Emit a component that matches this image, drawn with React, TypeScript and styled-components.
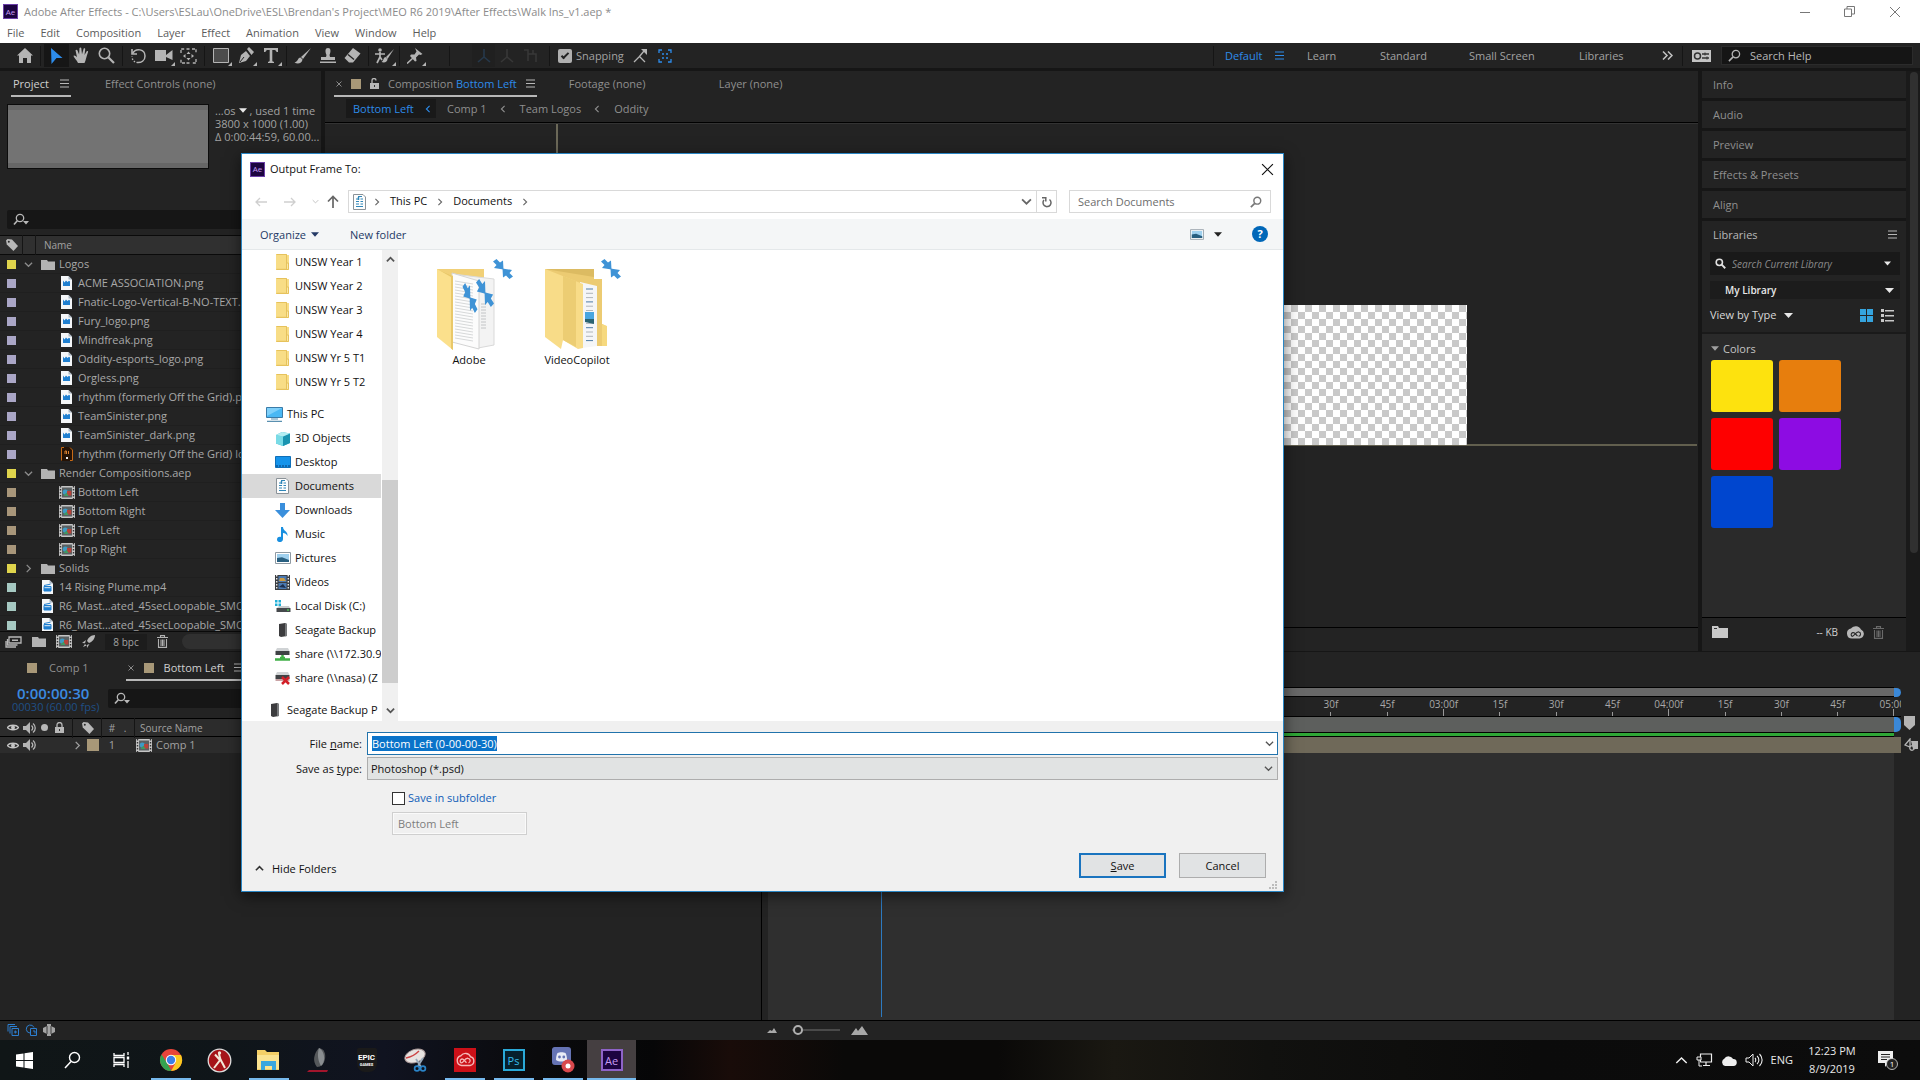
import React, { useEffect, useRef } from "react";
import styled, { createGlobalStyle } from "styled-components";

const Global = createGlobalStyle`
  *, *::before, *::after { box-sizing: border-box; }
  body { margin: 0; background: #161616; overflow: hidden; }
  body, button, input, select { font-family: "Open Sans", "Noto Sans", sans-serif; }
  button, input, select { margin: 0; padding: 0; border: 0; background: none; color: inherit; font-size: inherit; border-radius: 0; }
  button { cursor: default; white-space: nowrap; }
  ul { list-style: none; margin: 0; padding: 0; }
  svg { display: block; flex: none; }
`;

const c = {
  panel: "#232323",
  dark: "#161616",
  line: "#0a0a0a",
  text: "#a2a2a2",
  blue: "#2d8ceb",
  tan: "#a89878",
};

/* ---------- icons ---------- */

type IcoProps = { w?: number; h?: number; box?: string; children: React.ReactNode };
const Ico = ({ w = 16, h = 16, box, children }: IcoProps) => (
  <svg width={w} height={h} viewBox={box || `0 0 ${w} ${h}`} fill="none" aria-hidden="true">{children}</svg>
);

const Burger = ({ color = "#b8b8b8" }: { color?: string }) => (
  <Ico w={9} h={9}><path d="M0 1h9M0 4.500h9M0 8h9" stroke={color} strokeWidth="1" /></Ico>
);
const Caret = ({ color = "#e8e8e8", w = 9 }: { color?: string; w?: number }) => (
  <Ico w={w} h={5} box="0 0 9 5"><path d="M0 0h9L4.500 5z" fill={color} /></Ico>
);
const Chevron = ({ dir = "down", color = "#444", size = 9, sw = 1.4 }: { dir?: "down" | "up" | "left" | "right"; color?: string; size?: number; sw?: number }) => {
  const d = { down: "M1 3l4 4 4-4", up: "M1 7l4-4 4 4", left: "M7 1L3 5l4 4", right: "M3 1l4 4-4 4" }[dir];
  return <Ico w={size} h={size} box="0 0 10 10"><path d={d} stroke={color} strokeWidth={sw} /></Ico>;
};
const Loupe = ({ color = "#b4b4b4", size = 13, flip = false, sw = 1.4 }: { color?: string; size?: number; flip?: boolean; sw?: number }) => (
  <Ico w={size} h={size} box="0 0 14 14">
    {flip
      ? <><circle cx="5.500" cy="5.500" r="4" stroke={color} strokeWidth={sw} /><path d="M8.500 8.500L13 13" stroke={color} strokeWidth={sw + 0.4} /></>
      : <><circle cx="8.500" cy="5.500" r="4" stroke={color} strokeWidth={sw} /><path d="M5.500 8.500L1 13" stroke={color} strokeWidth={sw + 0.3} /></>}
  </Ico>
);
const LoupeMenu = () => (
  <Ico w={17} h={13}><circle cx="7" cy="5" r="3.700" stroke="#b8b8b8" strokeWidth="1.300" /><path d="M4.300 7.700L1 11.500" stroke="#b8b8b8" strokeWidth="1.600" /><path d="M10 8h6l-3 3.500z" fill="#b8b8b8" /></Ico>
);
const Cross = ({ color, size = 12, sw = 1 }: { color: string; size?: number; sw?: number }) => (
  <Ico w={size} h={size} box="0 0 12 12"><path d="M1 1l10 10M11 1L1 11" stroke={color} strokeWidth={sw} /></Ico>
);
const FolderGrey = () => (
  <Ico w={14} h={11}><path d="M0 1h6l1 1.500h7V11H0z" fill="#b3b3b3" /></Ico>
);
const CompIcon = () => (
  <Ico w={16} h={13}>
    <path d="M0 0h16v13H0z" fill="#c4c4c4" /><path d="M3 1.500h10v10H3z" fill="#5b6062" />
    <path d="M1.500 0v13M14.500 0v13" stroke="#333" strokeWidth="1.400" strokeDasharray="1.500 1.500" />
    <circle cx="6.300" cy="6" r="2.600" fill="#3f9ac4" /><path d="M8 5h4.300v4.500H8z" fill="#b8433b" /><path d="M4.500 10l3-3.500 2 3.500z" fill="#3f9a62" />
  </Ico>
);
const PngIcon = () => (
  <Ico w={11} h={14}><path d="M0 0h7.500L11 3.500V14H0z" fill="#f4f6f8" /><path d="M7.500 0L11 3.500H7.500z" fill="#a9b6c2" /><path d="M2 4.500l1.500 2 1.500-2 1.500 1.500L8 4.800l1 .8V10H2z" fill="#1f7fd0" /></Ico>
);
const MovIcon = () => (
  <Ico w={11} h={14}><path d="M0 0h7.500L11 3.500V14H0z" fill="#f4f6f8" /><path d="M7.500 0L11 3.500H7.500z" fill="#a9b6c2" /><path d="M2 6.500h7V11H2zM2 5.500l6.500-1.300" fill="#1f7fd0" stroke="#1f7fd0" /><path d="M2.500 7.700h6" stroke="#dceaf6" /></Ico>
);
const AiIcon = () => (
  <Ico w={12} h={14}><path d="M0 0h9l3 3v11H0z" fill="#241205" /><path d="M.5 13.500V.5H3M9 .5l2.500 2.500v10.500H9" stroke="#c76a17" /><path d="M4 7V4h1.500v3M7.500 7V4" stroke="#d98030" /><path d="M5 10h2v2H5z" fill="#eee" /></Ico>
);
const Eye = () => (
  <Ico w={12} h={9}><path d="M.5 4.500C2.500 1.500 9.500 1.500 11.500 4.500 9.500 7.500 2.500 7.500.5 4.500z" stroke="#c4c4c4" strokeWidth="1.300" /><circle cx="6" cy="4.500" r="2" fill="#c4c4c4" /></Ico>
);
const Sound = () => (
  <Ico w={13} h={12}><path d="M0 4h3l4-4v12L3 8H0z" fill="#b4b4b4" /><path d="M8.500 3.500c1.500 1.500 1.500 3.500 0 5M10 1.500c3 2.500 3 6.500 0 9" stroke="#b4b4b4" strokeWidth="1.300" /></Ico>
);
const Lock = ({ open = false }: { open?: boolean }) => (
  <Ico w={9} h={11}><path d="M0 5h9v6H0z" fill="#b8b8b8" /><path d={open ? "M2 5V2.500a2 2 0 014 0" : "M2 5V3a2.500 2.500 0 015 0v2"} stroke="#b8b8b8" strokeWidth="1.300" /><path d="M4 7h1v2H4z" fill="#333" /></Ico>
);
const Tag = () => (
  <Ico w={12} h={12}><path d="M0 1.500L1.500 0 6 .5 12 7l-4.500 5L.8 5.500z" fill="#b8b8b8" /><circle cx="2.800" cy="2.800" r="1" fill="#2a2a2a" /></Ico>
);
const Trash = ({ color = "#b0b0b0" }: { color?: string }) => (
  <Ico w={11} h={13}><path d="M0 2.500h11M3.500 2V.6h4V2M1.500 4v8.400h8V4M4 4.500v6.500M5.500 4.500v6.500M7 4.500v6.500" stroke={color} strokeWidth="1.100" /></Ico>
);
const AeLogo = styled.span<{ $s: number; $f: number }>`
  display: grid; place-items: center; flex: none;
  width: ${p => p.$s}px; height: ${p => p.$s}px;
  background: #1c0440; border: 1px solid #6b3fa8; color: #c59bf2;
  font-size: ${p => p.$f}px; line-height: 1;
`;

/* ---------- shell ---------- */

const Shell = styled.div`
  position: relative; height: 100vh; display: grid; overflow: hidden;
  grid-template-rows: 43px 27px minmax(0, 3fr) minmax(0, 2fr) 40px;
  background: ${c.dark}; color: ${c.text}; font-size: 11px; line-height: 16px;
`;
const TitleArea = styled.header`background: #fff;`;
const TitleRow = styled.div`
  display: flex; align-items: center; gap: 6px; height: 23px; padding: 0 19px 0 3px; color: #8b8b8b;
`;
const TitleText = styled.span`flex: 1;`;
const WinButtons = styled.div`display: flex; gap: 34px; align-items: center; height: 100%;`;
const PlainButton = styled.button`display: flex; align-items: center; justify-content: center;`;
const MenuRow = styled.nav`display: flex; gap: 16px; height: 19px; padding-left: 7px; color: #5c5c5c;`;

const Toolbar = styled.div`
  display: flex; align-items: center; background: ${c.panel}; padding: 0 7px 0 12px; border-bottom: 2px solid ${c.dark};
`;
const Tool = styled.button<{ $on?: boolean; $more?: boolean; $dim?: boolean }>`
  position: relative; display: grid; place-items: center; width: ${p => (p.$dim ? 23 : 25)}px; height: 23px; color: #b4b4b4;
  background: ${p => (p.$on ? "#161616" : "transparent")}; opacity: ${p => (p.$dim ? 0.2 : 1)};
  &::after { content: ${p => (p.$more ? '""' : "none")}; position: absolute; right: 1px; bottom: 1px; border: 2px solid transparent; border-right-color: #b4b4b4; border-bottom-color: #b4b4b4; }
`;
const Sep = styled.span<{ $m?: number }>`width: 1px; height: 20px; margin: 0 ${p => p.$m ?? 3}px; background: #151515;`;
const SnapLabel = styled.label`display: flex; align-items: center; gap: 4px; margin-right: 4px;`;
const SnapBox = styled.input`
  appearance: none; width: 14px; height: 14px; border-radius: 2px; background: #b0b0b0; display: grid; place-items: center;
  &::after { content: ""; width: 4px; height: 8px; margin-bottom: 2px; border: solid #222; border-width: 0 2px 2px 0; transform: rotate(45deg); }
`;
const Spaces = styled.div`display: flex; align-items: center; margin-left: auto; height: 100%;`;
const Space = styled.button<{ $w: number; $on?: boolean }>`
  width: ${p => p.$w}px; text-align: left; color: ${p => (p.$on ? c.blue : c.text)};
`;
const BurgerSlot = styled.span`width: 32px;`;
const HelpBox = styled.label`
  display: flex; align-items: center; gap: 9px; width: 192px; height: 19px; padding-left: 6px; margin-left: 10px; background: #151515; border: 1px solid #2b2b2b;
  input { width: 100%; color: #c8c8c8; outline: 0; }
  input::placeholder { color: #b8b8b8; opacity: 1; }
`;

const TOOLS = {
  home: <Ico w={16} h={15}><path d="M8 0l8 7.500h-2V15h-4v-5H6v5H2V7.500H0z" fill="currentColor" /></Ico>,
  arrow: <Ico w={13} h={16}><path d="M1 0l11.500 10H6.500L1.500 16z" fill="#2d8ceb" /></Ico>,
  hand: <Ico w={17} h={17}><path d="M5 16C4 13 1 11 .5 9c.8-1 2.200 0 3.500 1.200L2.500 3.200c.8-1 1.600-.5 2 .3l1.600 4L6.500 1c.8-1 1.700-.6 1.800.3L9 7.200l1.700-5.800c1-.6 1.600 0 1.500.9L11.500 8l2.400-4c1-.3 1.400.4 1.100 1.200-1.600 4-2 8-3.500 10.800z" fill="currentColor" /></Ico>,
  zoom: <Ico w={17} h={17}><circle cx="6.500" cy="6.500" r="5.200" stroke="currentColor" strokeWidth="1.600" /><path d="M10.500 10.500L16 16" stroke="currentColor" strokeWidth="2.200" /></Ico>,
  rotate: <Ico w={17} h={16}><path d="M2 1v5h5" stroke="currentColor" strokeWidth="1.600" /><path d="M2.500 5.500C6-.5 15 1 15 8c0 5-4 6.500-7 6.500" stroke="currentColor" strokeWidth="1.500" /><path d="M8 14.500C4.500 14.500 2 12 2 8.500" stroke="currentColor" strokeWidth="1.400" strokeDasharray="1.500 1.500" /></Ico>,
  camera: <Ico w={18} h={13}><path d="M0 1h11v11H0zM11 6l6.500-5v10L11 8z" fill="currentColor" /></Ico>,
  anchor: <Ico w={17} h={16}><path d="M1 5V1h4M12 1h4v4M16 11v4h-4M5 15H1v-4M6.500 1h4M6.500 15h4" stroke="currentColor" strokeWidth="1.300" strokeDasharray="3 1.200" /><path d="M8.500 3.500l2 2.500h-4zM8.500 12.500l2-2.500h-4zM3 8l2.500-2v4zM14 8l-2.500-2v4z" fill="currentColor" /></Ico>,
  rect: <Ico w={16} h={15}><path d="M.5.500h15v14H.5z" fill="#4c4c4c" stroke="currentColor" /></Ico>,
  pen: <Ico w={16} h={17}><path d="M1 16l2-8 5-4 4 5-4 5z" fill="currentColor" /><path d="M9 2l2-2 5 5-2.500 3z" fill="currentColor" /><path d="M2 15l4-5" stroke="#232323" /></Ico>,
  type: <Ico w={14} h={15}><path d="M0 0h14v4h-1.500c-.3-1.500-1-2-3-2H8.300v10.500c0 1 .5 1.200 1.700 1.300V15H4v-1.200c1.200-.1 1.700-.3 1.700-1.300V2H4.500c-2 0-2.700.5-3 2H0z" fill="currentColor" /></Ico>,
  brush: <Ico w={17} h={16}><path d="M17 0L7 9l2 2z" fill="currentColor" /><path d="M6.500 9.500c-3 0-2 4-6 5 3 2 7.500 1 8-3z" fill="currentColor" /></Ico>,
  stamp: <Ico w={16} h={15}><path d="M6.500 7C5 3.500 5 0 8 0s3 3.500 1.500 7L10 9h5v3H1V9h5zM0 13.500h16V15H0z" fill="currentColor" /></Ico>,
  eraser: <Ico w={17} h={15}><path d="M9 0l7.500 5.500L9 14.500H5L.5 10z" fill="currentColor" /><path d="M4 6.500l6 5" stroke="#232323" strokeWidth="1.300" /></Ico>,
  roto: <Ico w={19} h={16}><path d="M19 1l-8 8 1.500 2z" fill="currentColor" /><path d="M10.500 9c-2 0-2 4-4 5 3 1 6 0 6-3z" fill="currentColor" /><circle cx="5" cy="2" r="1.800" fill="currentColor" /><path d="M5 4v5l-3 6M5 9l2 3M0 6h10" stroke="currentColor" strokeWidth="1.700" /></Ico>,
  pin: <Ico w={16} h={16}><path d="M8 0l7.500 6-2 1-1.500-.5-3 3 .5 3.500-1.500.5L3 8l1-1.500h3.500l2-3z" fill="currentColor" /><path d="M6 10L0 15.500" stroke="currentColor" strokeWidth="1.600" /></Ico>,
  axis: <Ico w={16} h={14}><path d="M8 0v8l6 5M8 8l-6 5" stroke="#888" strokeWidth="1.600" /></Ico>,
  axisView: <Ico w={16} h={14}><path d="M2 1h4v11M6 5h8v8M11 1v4" stroke="#888" strokeWidth="1.500" /></Ico>,
  axisBlue: <Ico w={16} h={14}><path d="M8 0v8l6 5M8 8l-6 5" stroke="#2d8ceb" strokeWidth="1.600" /></Ico>,
};

/* ---------- panels ---------- */

const Workspace = styled.main`
  display: grid; grid-template-columns: 321px minmax(0, 1fr) 218px; gap: 4px; min-height: 0; padding: 1px 0;
`;
const Panel = styled.section`display: flex; flex-direction: column; min-width: 0; min-height: 0; background: ${c.panel}; overflow: hidden;`;
const Tabs = styled.div<{ $pad: number; $gap: number }>`
  display: flex; align-items: flex-end; height: 26px; flex: none; padding-left: ${p => p.$pad}px; gap: ${p => p.$gap}px;
`;
const Tab = styled.button<{ $on?: boolean; $gap?: number; $w?: number }>`
  display: flex; align-items: center; gap: ${p => p.$gap ?? 11}px; height: 22px; padding: 0 2px 3px;
  width: ${p => (p.$w ? `${p.$w}px` : "auto")};
  color: ${p => (p.$on ? "#d0d0d0" : "#8f8f8f")};
  border-bottom: 2px solid ${p => (p.$on ? "#b8b8b8" : "transparent")};
`;
const Dim = styled.span`color: #8f8f8f;`;
const Blue = styled.span`color: ${c.blue};`;
const Square = styled.i<{ $c: string; $s?: number }>`flex: none; width: ${p => p.$s ?? 10}px; height: ${p => p.$s ?? 10}px; background: ${p => p.$c};`;

const Preview = styled.div`display: flex; gap: 6px; padding: 7px 0 0 7px; height: 113px; flex: none; line-height: 13px; white-space: nowrap;`;
const Thumb = styled.div`
  width: 202px; height: 65px; flex: none; border: 1px solid #0c0c0c;
  background: linear-gradient(#686868 5px, #737373 5px, #737373 58px, #666 58px);
`;
const InfoLine = styled.div`display: flex; align-items: center; gap: 3px;`;
const DarkSearch = styled.label`
  display: flex; align-items: center; height: 19px; padding-left: 6px; background: #161616; border-radius: 2px; min-width: 0;
  input { flex: 1; min-width: 0; outline: 0; }
`;
const ProjSearch = styled(DarkSearch)`flex: none; margin-left: 7px;`;
const ProjHead = styled.div`
  display: flex; align-items: center; height: 20px; flex: none; margin-top: 6px; background: #303030; border-top: 1px solid ${c.line}; border-bottom: 1px solid ${c.line}; padding-left: 6px; font-size: 10px;
`;
const Items = styled.ul`flex: 1; min-height: 0; overflow: hidden;`;
const Item = styled.li<{ $lvl: number }>`
  display: flex; align-items: center; height: 19px; border-bottom: 1px solid #1f1f1f; padding-left: 7px; white-space: nowrap; color: #a8a8a8;
  & > b { display: grid; place-items: center; width: 24px; margin-left: ${p => (p.$lvl ? 19 : 0)}px; }
  & > em { display: grid; place-items: center; width: 15px; margin-right: 4px; }
`;
const ProjFoot = styled.div`
  display: flex; align-items: center; gap: 10px; height: 20px; flex: none; padding-left: 5px; border-top: 1px solid ${c.line};
`;
const Bpc = styled.span`width: 42px; text-align: center; background: #1c1c1c; font-size: 10px;`;
const Pill = styled.span`flex: 1; height: 15px; border-radius: 8px 0 0 8px; background: #303030; margin-left: 4px;`;

const FILES: [number, string, string, string][] = [
  [0, "#dfd44c", "open", "Logos"],
  [1, "#aaa6c6", "png", "ACME ASSOCIATION.png"],
  [1, "#aaa6c6", "png", "Fnatic-Logo-Vertical-B-NO-TEXT.png"],
  [1, "#aaa6c6", "png", "Fury_logo.png"],
  [1, "#aaa6c6", "png", "Mindfreak.png"],
  [1, "#aaa6c6", "png", "Oddity-esports_logo.png"],
  [1, "#aaa6c6", "png", "Orgless.png"],
  [1, "#aaa6c6", "png", "rhythm (formerly Off the Grid).png"],
  [1, "#aaa6c6", "png", "TeamSinister.png"],
  [1, "#aaa6c6", "png", "TeamSinister_dark.png"],
  [1, "#aaa6c6", "ai", "rhythm (formerly Off the Grid) logo"],
  [0, "#dfd44c", "open", "Render Compositions.aep"],
  [1, "#a8967a", "comp", "Bottom Left"],
  [1, "#a8967a", "comp", "Bottom Right"],
  [1, "#a8967a", "comp", "Top Left"],
  [1, "#a8967a", "comp", "Top Right"],
  [0, "#dfd44c", "closed", "Solids"],
  [0, "#a6c9c2", "mov", "14 Rising Plume.mp4"],
  [0, "#a6c9c2", "mov", "R6_Mast...ated_45secLoopable_SMO"],
  [0, "#a6c9c2", "mov", "R6_Mast...ated_45secLoopable_SMO"],
];
const fileIcon = (k: string) =>
  k === "png" ? <PngIcon /> : k === "ai" ? <AiIcon /> : k === "comp" ? <CompIcon /> : k === "mov" ? <MovIcon /> : <FolderGrey />;

const ProjectPanel = () => (
  <Panel>
    <Tabs $pad={11} $gap={32}>
      <Tab $on>Project <Burger /></Tab>
      <Tab>Effect Controls (none)</Tab>
    </Tabs>
    <Preview>
      <Thumb />
      <div>
        <InfoLine>...os <Caret w={8} /> , used 1 time</InfoLine>
        <InfoLine>3800 x 1000 (1.00)</InfoLine>
        <InfoLine>Δ 0:00:44:59, 60.00...</InfoLine>
      </div>
    </Preview>
    <ProjSearch aria-label="Search project"><LoupeMenu /><input type="text" /></ProjSearch>
    <ProjHead><Tag /><Sep $m={4} /><Sep $m={8} />Name</ProjHead>
    <Items>
      {FILES.map(([lvl, color, kind, name], i) => (
        <Item key={i} $lvl={lvl}>
          <Square $c={color} $s={9} />
          <b>{kind === "open" ? <Chevron dir="down" color="#8c8c8c" /> : kind === "closed" ? <Chevron dir="right" color="#8c8c8c" /> : null}</b>
          <em>{fileIcon(kind)}</em>
          {name}
        </Item>
      ))}
    </Items>
    <ProjFoot>
      <Ico w={17} h={12}><path d="M4 1h12v6H4zM1 5v6h10M2.500 3v6h10" stroke="#b8b8b8" strokeWidth="1.300" /><path d="M7 3.500h6v1.500H7z" fill="#b8b8b8" /></Ico>
      <FolderGrey /><CompIcon />
      <Ico w={13} h={13}><path d="M13 0c-4 0-7 3-8 6l2 2c3-1 6-4 6-8zM4 5L0 8l3 .3zM7.500 9L5 13l-.2-3zM3 9l1.500 1.500L1 12z" fill="#b8b8b8" /></Ico>
      <Bpc>8 bpc</Bpc>
      <Trash /><Pill />
    </ProjFoot>
  </Panel>
);

const Crumbs = styled.div`
  display: flex; align-items: center; height: 26px; flex: none; padding: 0 0 2px 21px; border-bottom: 1px solid #000; color: #8f8f8f;
`;
const CrumbOn = styled.button`
  display: flex; align-items: center; justify-content: space-between; width: 90px; height: 19px; padding: 0 4px 0 7px; margin-right: 11px; background: #191919; color: ${c.blue};
`;
const Crumb = styled.button`margin-right: 12px;`;
const CrumbGap = styled.span`margin-right: 13px;`;
const Viewer = styled.div`position: relative; flex: 1; border-top: 1px solid #333;`;
const Guide = styled.i`position: absolute; left: 231px; top: 0; width: 2px; height: 181px; background: #6b6858;`;
const Canvas = styled.div`
  position: absolute; right: 231px; left: 231px; top: 181px; height: 140px;
  background: repeating-conic-gradient(#c9c9c9 0 25%, #fff 0 50%) 0 0 / 14px 14px;
`;
const Floor = styled.i`position: absolute; left: 0; right: 1px; top: 320px; height: 2px; background: #625f4e;`;
const ViewFoot = styled.div`height: 24px; border-top: 1px solid #000;`;

const CompPanel = () => (
  <Panel>
    <Tabs $pad={9} $gap={30}>
      <Tab $on $gap={9}>
        <Cross color="#8a8a8a" size={6} sw={2} /><Square $c={c.tan} /><Lock open />
        <span><Dim>Composition </Dim><Blue>Bottom Left</Blue></span><Burger />
      </Tab>
      <Tab $w={120}>Footage (none)</Tab>
      <Tab>Layer (none)</Tab>
    </Tabs>
    <Crumbs>
      <CrumbOn>Bottom Left <Chevron dir="left" color={c.blue} size={8} /></CrumbOn>
      <Crumb>Comp 1</Crumb><CrumbGap><Chevron dir="left" color="#8f8f8f" size={8} /></CrumbGap>
      <Crumb>Team Logos</Crumb><CrumbGap><Chevron dir="left" color="#8f8f8f" size={8} /></CrumbGap>
      <Crumb>Oddity</Crumb>
    </Crumbs>
    <Viewer><Guide /><Floor /><Canvas /></Viewer>
    <ViewFoot />
  </Panel>
);

const RightWrap = styled.div`display: grid; grid-template-columns: minmax(0, 1fr) 14px; min-height: 0;`;
const Stack = styled.aside`display: flex; flex-direction: column; min-height: 0; background: ${c.panel};`;
const StackRow = styled.button<{ $on?: boolean }>`
  display: flex; align-items: center; justify-content: space-between; flex: none; height: ${p => (p.$on ? 27 : 30)}px; padding: 0 9px 0 11px;
  border-bottom: ${p => (p.$on ? 0 : 3)}px solid ${c.dark}; color: ${p => (p.$on ? "#b8b8b8" : "#8f8f8f")};
`;
const Track = styled.div`padding: 1px 2px 0; background: #1a1a1a;`;
const Grip = styled.div`height: 481px; border-radius: 5px; background: #303030; margin-left: 2px;`;
const LibTools = styled.div`display: flex; flex-direction: column; flex: none; padding: 4px 6px 0 8px; height: 86px; border-bottom: 2px solid #1a1a1a;`;
const LibSearch = styled.label`
  display: flex; align-items: center; gap: 6px; height: 24px; padding: 0 9px 0 5px; background: #191919;
  input { flex: 1; min-width: 0; outline: 0; font-size: 10px; font-style: italic; }
  input::placeholder { color: #8a8a8a; opacity: 1; }
`;
const LibPick = styled.button`
  display: flex; align-items: center; justify-content: space-between; height: 18px; margin-top: 6px; padding: 0 6px 0 15px; background: #1c1c1c; color: #e8e8e8; font-size: 10px; font-weight: 600;
`;
const LibView = styled.div`display: flex; align-items: center; gap: 8px; height: 34px; padding-right: 6px; color: #d8d8d8; & > :nth-child(3) { margin-left: auto; }`;
const LibBody = styled.div`flex: 1; min-height: 0; background: #2a2a2a; padding: 6px 9px; border-bottom: 1px solid #000;`;
const ColorsHead = styled.div`display: flex; align-items: center; gap: 4px; height: 17px; color: #c4c4c4; margin-bottom: 3px;`;
const Swatches = styled.div`display: grid; grid-template-columns: 62px 62px; gap: 6px;`;
const Swatch = styled.button<{ $c: string }>`height: 52px; border-radius: 3px; background: ${p => p.$c};`;
const LibFoot = styled.div`display: flex; align-items: center; gap: 9px; height: 28px; margin-bottom: 5px; padding: 0 22px 0 10px; color: #d0d0d0; font-size: 10px; & > :first-child { margin-right: auto; }`;

const RightPanel = () => (
  <RightWrap>
    <Stack>
      {["Info", "Audio", "Preview", "Effects & Presets", "Align"].map(n => <StackRow key={n}>{n}</StackRow>)}
      <StackRow $on>Libraries <Burger /></StackRow>
      <LibTools>
        <LibSearch aria-label="Search library"><Loupe flip color="#e0e0e0" size={11} sw={2} /><input placeholder="Search Current Library" /><Caret w={7} /></LibSearch>
        <LibPick>My Library <Caret /></LibPick>
        <LibView>
          <span>View by Type</span><Caret />
          <Ico w={13} h={13}><path d="M0 0h6v6H0zM7 0h6v6H7zM0 7h6v6H0zM7 7h6v6H7z" fill="#35a4de" /></Ico>
          <Ico w={13} h={13}><path d="M0 0h3v3H0zM0 5h3v3H0zM0 10h3v3H0zM4 1h9v1.500H4zM4 6h9v1.500H4zM4 11h9v1.500H4z" fill="#c8c8c8" /></Ico>
        </LibView>
      </LibTools>
      <LibBody>
        <ColorsHead><Caret color="#a0a0a0" w={8} />Colors</ColorsHead>
        <Swatches>
          {["#fde20e", "#e77e0d", "#fe0000", "#8d0ce3", "#0046cf"].map(s => <Swatch key={s} $c={s} aria-label={s} />)}
        </Swatches>
      </LibBody>
      <LibFoot>
        <Ico w={16} h={12}><path d="M0 0h6l1 2h9v10H0z" fill="#c8c8c8" /><path d="M2 2.500h3" stroke="#333" /></Ico>
        <span>-- KB</span>
        <Ico w={17} h={13}><path d="M5 12.500a5 5 0 01-1-9.900A6 6 0 0114 3.500a4.700 4.700 0 01-1.500 9z" fill="#b8b8b8" /><path d="M10.500 10L7.500 7a2 2 0 10-2.500 3.300c2 .7 4-5.300 7-4.300a2.200 2.200 0 01-.5 4.300" stroke="#2a2a2a" strokeWidth="1.100" /></Ico>
        <Trash color="#6a6a6a" />
      </LibFoot>
    </Stack>
    <Track><Grip /></Track>
  </RightWrap>
);

/* ---------- timeline ---------- */

const Timeline = styled.section`display: flex; flex-direction: column; min-height: 0; background: ${c.panel}; padding-top: 3px;`;
const TlBody = styled.div`flex: 1; display: grid; grid-template-columns: 762px minmax(0, 1fr) 26px; min-height: 0;`;
const TlLeft = styled.div`border-right: 1px solid #000; min-width: 0;`;
const TimeRow = styled.div`display: flex; align-items: center; height: 37px; padding-right: 100px;`;
const TimeBox = styled.div`width: 108px; padding-left: 12px; line-height: 14px; color: #1f4f86;`;
const Timecode = styled.div`padding-left: 5px; font-size: 15px; font-weight: 600; color: #3b8ae0;`;
const TimeSearch = styled(DarkSearch)`flex: 1; margin-bottom: 2px;`;
const HeadRow = styled.div`display: flex; align-items: center; height: 19px; background: #2c2c2c; border-top: 1px solid #000; border-bottom: 1px solid #000; padding-left: 7px; gap: 4px; font-size: 10px;`;
const LayerRow = styled.div`display: flex; align-items: center; height: 16px; background: #2c2c2c; padding-left: 7px; gap: 4px;`;
const Cell = styled.span<{ $w: number }>`display: flex; align-items: center; justify-content: center; flex: none; width: ${p => p.$w}px;`;
const TlRight = styled.div`position: relative; display: flex; flex-direction: column; margin-left: 6px; min-width: 0;`;
const Navigator = styled.div`height: 10px; margin-top: 6px; background: #686868; border: solid #000; border-width: 1px 0;`;
const Ruler = styled.div`
  display: grid; grid-template-columns: repeat(20, minmax(0, 1fr)); height: 20px; margin-right: -7px; padding-right: 7px; overflow: hidden;
  border-bottom: 1px solid #000; font-size: 10px; color: #a8a8a8;
`;
const Tick = styled.span<{ $major: boolean }>`
  display: flex; align-items: flex-start; justify-content: center; width: 200%; line-height: 15px;
  background: linear-gradient(#999, #999) center bottom / 1px ${p => (p.$major ? 7 : 4)}px no-repeat;
`;
const WorkArea = styled.div`height: 16px; background: #5d5f5d; border-bottom: 1px solid #000;`;
const Cached = styled.div`height: 4px; background: #2fa636; border-bottom: 1px solid #000;`;
const LayerBar = styled.div`height: 16px; background: #6f6959; margin-right: -7px;`;
const Void = styled.div`flex: 1; background: #2f2f2f;`;
const Playhead = styled.i`position: absolute; left: 10%; top: 16px; bottom: 3px; width: 1px; background: #2d7ac0;`;
const TlEdge = styled.div`position: relative; display: flex; flex-direction: column;`;
const Knob = styled.i<{ $h: number; $t: number }>`width: 7px; height: ${p => p.$h}px; margin-top: ${p => p.$t}px; border-radius: 0 5px 5px 0; background: #3a88d8;`;
const EdgeIcons = styled.div`display: flex; flex-direction: column; gap: 8px; padding-left: 10px; margin-top: -16px;`;
const TlFoot = styled.div`
  display: grid; grid-template-columns: 760px 1fr; align-items: center; height: 20px; flex: none; border-top: 1px solid #000; padding-bottom: 1px;
`;
const FootGroup = styled.div`display: flex; align-items: center; gap: 5px; padding-left: 7px;`;
const ZoomRange = styled.input`
  appearance: none; width: 48px; height: 12px; margin: 0 6px 0 10px;
  &::-webkit-slider-runnable-track { height: 2px; background: #4a4a4a; }
  &::-webkit-slider-thumb { appearance: none; width: 10px; height: 10px; margin-top: -4px; border: 2px solid #b0b0b0; border-radius: 50%; background: #232323; }
`;

const tickName = (i: number) => {
  const n = i + 1;
  return n % 4 ? `${(n % 4) * 15}f` : `0${n / 4}:00f`;
};

const TimelinePanel = () => (
  <Timeline>
    <Tabs $pad={25} $gap={35}>
      <Tab $gap={12}><Square $c={c.tan} />Comp 1</Tab>
      <Tab $on $gap={10}><Cross color="#8a8a8a" size={6} sw={2} /><Square $c={c.tan} />Bottom Left <Burger /></Tab>
    </Tabs>
    <TlBody>
      <TlLeft>
        <TimeRow>
          <TimeBox><Timecode>0:00:00:30</Timecode>00030 (60.00 fps)</TimeBox>
          <TimeSearch aria-label="Search layers"><LoupeMenu /><input type="text" /></TimeSearch>
        </TimeRow>
        <HeadRow>
          <Cell $w={12}><Eye /></Cell><Cell $w={12}><Sound /></Cell>
          <Cell $w={10}><Ico w={7} h={7}><circle cx="3.500" cy="3.500" r="3.500" fill="#b8b8b8" /></Ico></Cell>
          <Cell $w={12}><Lock /></Cell><Sep $m={3} /><Cell $w={16}><Tag /></Cell><Sep $m={1} />
          <Cell $w={10}>#</Cell><Cell $w={8}>.</Cell><Sep $m={1} />Source Name
        </HeadRow>
        <LayerRow>
          <Cell $w={12}><Eye /></Cell><Cell $w={12}><Sound /></Cell><Cell $w={28} />
          <Cell $w={12}><Chevron dir="right" color="#a0a0a0" /></Cell><Cell $w={12}><Square $c={c.tan} $s={12} /></Cell>
          <Cell $w={18}>1</Cell><Cell $w={7} /><Cell $w={16}><CompIcon /></Cell>Comp 1
        </LayerRow>
      </TlLeft>
      <TlRight>
        <Navigator />
        <Ruler>{Array.from({ length: 20 }, (_, i) => <Tick key={i} $major={(i + 1) % 4 === 0}>{tickName(i)}</Tick>)}</Ruler>
        <WorkArea /><Cached /><LayerBar /><Void />
        <Playhead />
      </TlRight>
      <TlEdge>
        <Knob $h={9} $t={7} /><Knob $h={15} $t={20} />
        <EdgeIcons>
          <Ico w={11} h={14}><path d="M0 0h11v9l-5.500 5L0 9z" fill="#b4b4b4" /></Ico>
          <Ico w={15} h={13}><path d="M7 3h7v8H9z" fill="#b4b4b4" /><path d="M1 7l5-6v8zM6 11a2 2 0 104-2 2 2 0 00-4 2" stroke="#b4b4b4" strokeWidth="1.300" /></Ico>
        </EdgeIcons>
      </TlEdge>
    </TlBody>
    <TlFoot>
      <FootGroup>
        <Ico w={13} h={12}><path d="M1 7.500V.5h7M3 9.500V2.500h7" stroke="#2d7fd0" /><path d="M5 4.500h6.500v7H5zM7 8h3M8.300 6.500v3" stroke="#2d7fd0" /></Ico>
        <Ico w={13} h={12}><path d="M9 3.500A4 4 0 105 9" stroke="#2d7fd0" /><path d="M5.500 4.500h6v7h-6zM8 7h2v2.500" stroke="#2d7fd0" /></Ico>
        <Ico w={12} h={12}><path d="M4 0h4v2l4 2v4l-4 2v2H4v-2L0 8V4l4-2z" fill="#a4a4a4" /><path d="M4 2v8M8 2v8" stroke="#232323" strokeWidth=".8" /></Ico>
      </FootGroup>
      <FootGroup>
        <Ico w={10} h={5}><path d="M0 5l3-3 2 1 2-3 3 5z" fill="#a8a8a8" /></Ico>
        <ZoomRange type="range" aria-label="Zoom" defaultValue={2} />
        <Ico w={17} h={9}><path d="M0 9l5-7 2 3 4-5 6 9z" fill="#a8a8a8" /></Ico>
      </FootGroup>
    </TlFoot>
  </Timeline>
);

/* ---------- save dialog ---------- */

const Dialog = styled.form`
  position: absolute; left: 241px; top: 153px; width: 1043px; display: flex; flex-direction: column;
  background: #fff; border: 1px solid #2a86c4; box-shadow: 0 4px 14px rgba(0, 0, 0, .55); color: #111;
`;
const DTitle = styled.div`display: flex; align-items: center; gap: 5px; height: 30px; padding: 0 9px 0 8px; & > button { margin-left: auto; }`;
const DNav = styled.div`display: flex; align-items: center; height: 35px; padding: 0 12px;`;
const NavBtn = styled(PlainButton)<{ $w: number }>`width: ${p => p.$w}px; height: 22px;`;
const Address = styled.div`
  display: flex; align-items: center; flex: 1; height: 23px; border: 1px solid #d9d9d9; padding-left: 4px; margin-right: 12px;
  & > :first-child { margin-right: 7px; }
`;
const AddrBtn = styled.button`margin: 0 9px 2px;`;
const AddrEnd = styled.div`display: flex; margin-left: auto;`;
const AddrEndBtn = styled(PlainButton)<{ $bar?: boolean }>`width: 20px; height: 21px; border-left: ${p => (p.$bar ? "1px solid #d9d9d9" : "0")};`;
const DSearch = styled.label`
  display: flex; align-items: center; width: 202px; height: 23px; border: 1px solid #d9d9d9; padding: 0 8px;
  input { flex: 1; min-width: 0; outline: 0; }
  input::placeholder { color: #6d6d6d; opacity: 1; }
`;
const DBar = styled.div`
  display: flex; align-items: center; height: 31px; padding: 0 15px 0 18px; background: #f4f6f7; border-bottom: 1px solid #e4e8ea; color: #243a66; gap: 31px;
`;
const BarBtn = styled(PlainButton)`gap: 5px;`;
const BarEnd = styled.div`display: flex; align-items: center; gap: 10px; margin-left: auto; & > :last-child { margin-left: 20px; }`;
const HelpDot = styled.button`width: 16px; height: 16px; border-radius: 50%; background: #0067b8; color: #fff; font-weight: 700; line-height: 16px; text-align: center;`;
const DMain = styled.div`display: grid; grid-template-columns: 139px 17px minmax(0, 1fr); height: 471px;`;
const Tree = styled.ul`overflow: hidden; white-space: nowrap;`;
const Node = styled.li<{ $root?: boolean; $gap?: boolean; $on?: boolean }>`
  display: flex; align-items: center; height: 24px; margin-top: ${p => (p.$gap ? 8 : 0)}px; padding-left: ${p => (p.$root ? 24 : 32)}px; gap: 4px;
  background: ${p => (p.$on ? "#d9d9d9" : "transparent")};
  & > i { display: grid; place-items: center; width: 17px; flex: none; }
`;
const DTrack = styled.div`display: flex; flex-direction: column; align-items: center; background: #f0f0f0; margin-left: 1px; padding: 5px 0 6px;`;
const DThumb = styled.div`width: 16px; height: 203px; background: #cdcdcd; margin-top: 216px; margin-bottom: auto;`;
const Files = styled.div`display: flex; align-items: flex-start; padding: 8px 0 0 17px;`;
const FileTile = styled.button`display: flex; flex-direction: column; align-items: center; width: 108px;`;
const DForm = styled.div`background: #f0f0f0; padding: 11px 5px 0 12px;`;
const Field = styled.div`display: grid; grid-template-columns: 108px minmax(0, 1fr); column-gap: 5px; align-items: center; margin-bottom: 2px; & > label { text-align: right; }`;
const Combo = styled.div`
  display: flex; align-items: center; height: 23px; background: #fff; border: 1px solid #2173ac; padding: 0 3px 0 4px;
  input { flex: 1; min-width: 0; outline: 0; height: 17px; }
  input::selection { background: #0a73c9; color: #fff; }
`;
const SelectWrap = styled.div`
  display: grid; grid-template-columns: minmax(0, 1fr) 13px; align-items: center; height: 23px; background: #e1e3e3; border: 1px solid #adadad;
  select { grid-area: 1 / 1 / 2 / 3; appearance: none; width: 100%; height: 21px; padding-left: 3px; outline: 0; }
  svg { grid-area: 1 / 2; pointer-events: none; }
`;
const Sub = styled.div`padding: 6px 0 0 138px;`;
const SubCheck = styled.label`
  display: flex; align-items: center; gap: 3px; height: 20px; color: #0f5db8;
  input { appearance: none; width: 13px; height: 13px; border: 1px solid #333; background: #fff; }
`;
const SubName = styled.input`display: block; width: 135px; height: 23px; margin-top: 4px; padding: 0 5px; border: 1px solid #cfcfcf; color: #7d7d7d; background: #f0f0f0; box-shadow: inset 0 0 0 1px #fafafa;`;
const Actions = styled.div`display: flex; align-items: center; gap: 13px; height: 44px; padding: 12px 12px 0 0; margin-top: 2px;`;
const Hide = styled(PlainButton)`gap: 8px; margin-right: auto; margin-left: 1px; padding-top: 6px;`;
const DBtn = styled.button<{ $main?: boolean }>`width: 87px; height: 25px; background: #e1e3e4; border: ${p => (p.$main ? "2px solid #1a74bf" : "1px solid #adadad")};`;
const GripCorner = styled.div`display: flex; justify-content: flex-end; height: 10px;`;

const FolderY = () => <Ico w={13} h={16}><path d="M0 0h11v1h2v15H0z" fill="#f8dd86" /><path d="M10 9h3v7h-3z" fill="#fbe9a8" /><path d="M.5.500h10v14.800H.5M10.500 9h2v6.500h-12" stroke="#e6c25c" /></Ico>;
const PcIcon = () => <Ico w={17} h={15}><path d="M.5.500h16v10H.5z" fill="#4ab8f4" stroke="#3a7ba8" /><path d="M1 1h15L1 9z" fill="#7fd0fa" /><path d="M5 12h7M1 14.300h15" stroke="#5a90b0" strokeWidth="1.200" /></Ico>;
const CubeIcon = () => <Ico w={16} h={15}><path d="M1 4l6-3 8 1.500V12l-7 3-7-2.500z" fill="#36b8ce" /><path d="M1 4l7 1.500V15l-7-2.500z" fill="#79dbe6" /><path d="M8 5.500l7-3V12l-7 3z" fill="#1a94b0" /><path d="M1 4l6-3 8 1.500-7 3z" fill="#b4eef2" /></Ico>;
const DeskIcon = () => <Ico w={16} h={12}><path d="M.5.500h15v11H.5z" fill="#1593ea" stroke="#0f6fb8" /><path d="M1 10h14" stroke="#0c5a9c" strokeWidth="1.500" strokeDasharray="2 1" /></Ico>;
const DocIcon = () => <Ico w={13} h={16}><path d="M.5.500H10l2.500 2.500v12.500H.5z" fill="#fdfdfd" stroke="#8a9298" /><path d="M5 2.500h4M3 5h3M7.500 5H10M3 7.500h3M7.500 7.500H10M3 10h3M7.500 10H10M3 12.500h7" stroke="#2f86b8" /><path d="M5.500 3v3" stroke="#2f86b8" strokeWidth="1.500" /></Ico>;
const DownIcon = () => <Ico w={15} h={15}><path d="M5 0h5v7h5l-7.500 8L0 7h5z" fill="#3a8fdc" /></Ico>;
const MusicIcon = () => <Ico w={11} h={15}><path d="M4 0h2c0 4 5 4 4.500 9C9.500 7 8 6 6 6v6c0 4-6 4-6 .5C0 10 2.500 9.500 4 10z" fill="#188fe0" /></Ico>;
const PicIcon = ({ w = 16, h = 12 }: { w?: number; h?: number }) => <Ico w={w} h={h} box="0 0 16 12"><path d="M.5.500h15v11H.5z" fill="#fff" stroke="#8f9aa3" /><path d="M2 2h12v8H2z" fill="#9fd0ee" /><path d="M2 6l5-.8L14 8v2H2z" fill="#285f80" /></Ico>;
const VidIcon = () => <Ico w={15} h={15}><path d="M0 0h15v15H0z" fill="#3b3e42" /><path d="M3.500 1h8v6h-8zM3.500 8h8v6h-8z" fill="#4a78b0" /><path d="M5 3h4l2 3H4z" fill="#c99a45" /><path d="M4 12l4-3 3 4z" fill="#1b2d4c" /><path d="M1.700 0v15M13.300 0v15" stroke="#e8e8e8" strokeWidth="1.400" strokeDasharray="1.500 1.500" /></Ico>;
const DiskIcon = () => <Ico w={16} h={13}><path d="M0 0h2.500v2.500H0zM3.500 0H6v2.500H3.500zM0 3.500h2.500V6H0zM3.500 3.500H6V6H3.500z" fill="#20b0d8" /><path d="M4 6h10l1 2H2z" fill="#c8ccce" /><path d="M1.500 8h14v4h-14z" fill="#45494c" /><path d="M12 10h2" stroke="#5f5" /></Ico>;
const DriveIcon = () => <Ico w={8} h={14}><path d="M0 1l6-1 2 1v12l-6 1-2-1z" fill="#3c3c3e" /><path d="M6 0l2 1v12l-2 .3z" fill="#77797b" /></Ico>;
const ShareIcon = ({ bad = false }: { bad?: boolean }) => (
  <Ico w={15} h={13}><path d="M2 0h11l1.500 3H.5z" fill="#d0d3d5" /><path d="M.5 3h14v4H.5z" fill="#3f4245" />
    {bad ? <><path d="M.5 7h14v2H.5z" fill="#c9a3a5" /><path d="M7 5l7 7M14 5l-7 7" stroke="#d21f28" strokeWidth="2.500" /></> : <path d="M0 11.500h15M7.500 7v5M5 10h5" stroke="#42b048" strokeWidth="2.500" />}
  </Ico>
);

const NODES: [string, React.ReactNode, { root?: boolean; gap?: boolean; on?: boolean }][] = [
  ...["UNSW Year 1", "UNSW Year 2", "UNSW Year 3", "UNSW Year 4", "UNSW Yr 5 T1", "UNSW Yr 5 T2"].map(
    n => [n, <FolderY />, {}] as [string, React.ReactNode, {}]
  ),
  ["This PC", <PcIcon />, { root: true, gap: true }],
  ["3D Objects", <CubeIcon />, {}],
  ["Desktop", <DeskIcon />, {}],
  ["Documents", <DocIcon />, { on: true }],
  ["Downloads", <DownIcon />, {}],
  ["Music", <MusicIcon />, {}],
  ["Pictures", <PicIcon />, {}],
  ["Videos", <VidIcon />, {}],
  ["Local Disk (C:)", <DiskIcon />, {}],
  ["Seagate Backup", <DriveIcon />, {}],
  ["share (\\\\172.30.9", <ShareIcon />, {}],
  ["share (\\\\nasa) (Z", <ShareIcon bad />, {}],
  ["Seagate Backup P", <DriveIcon />, { root: true, gap: true }],
];

/* pair of arrows pointing at each other, meeting at x,y */
const Sync = ({ x, y, sx = 1, sy = 1 }: { x: number; y: number; sx?: number; sy?: number }) => (
  <g transform={`translate(${x} ${y}) scale(${sx} ${sy})`} fill="#3f93d6">
    <path d="M.5.500L0-8.500-3-6.500-6.500-10-10-7.500-6.500-4-9-1z" />
    <path d="M-.5-.5L0 8.500 3 6.500 6.500 10 10 7.500 6.500 4 9 1z" />
  </g>
);
const AdobeFolder = () => (
  <Ico w={90} h={94}>
    <path d="M13 11h47v60H13z" fill="#f1d077" /><path d="M29 16l41 5v66l-16 3z" fill="#f3f3f3" stroke="#d9d9d9" /><path d="M28 15l27 8v68l-27-7z" fill="#fcfcfc" stroke="#d4d4d4" />
    {Array.from({ length: 20 }, (_, i) => <path key={i} d={`M31 ${23 + i * 3}l18 3`} stroke="#c5c8ca" strokeWidth=".7" />)}
    {Array.from({ length: 9 }, (_, i) => <path key={i} d={`M57 ${46 + i * 3}h5`} stroke="#b5b8ba" strokeWidth=".8" />)}
    <path d="M13 11l16 7v74L13 79z" fill="#fbe08c" /><path d="M13 11l16 7v74l-2-1.500V19z" fill="#e9c869" />
    <Sync x={46} y={40} sx={0.75} sy={1.500} /><Sync x={61} y={35} sx={0.9} sy={1.400} /><Sync x={79} y={11} />
  </Ico>
);
const VideoFolder = () => (
  <Ico w={90} h={94}>
    <path d="M13 11h49v10h8v45l4 2v20H50z" fill="#eccb72" /><path d="M13 11h49v8z" fill="#dcbb62" />
    <path d="M48 24l17 4v60l-15 2z" fill="#f5f6f7" />
    {Array.from({ length: 13 }, (_, i) => <path key={i} d={`M54 ${31 + i * 4.3}h7`} stroke={i % 3 ? "#b0b6ba" : "#4f7ca6"} />)}
    <path d="M53 54h9v7h-9z" fill="#49a6e0" /><path d="M53 61h9v5l-9-2z" fill="#2b6370" />
    <path d="M13 11l38 15v64l-5 1-15-9-2 9-16-12z" fill="#f8dc88" /><path d="M31 18l13 5v66l-13-7z" fill="#eccd73" /><path d="M70 66l5 2v20l-5 0z" fill="#f6d97f" />
    <Sync x={79} y={11} />
  </Ico>
);

const SaveDialog = () => {
  const nameRef = useRef<HTMLInputElement>(null);
  useEffect(() => {
    nameRef.current?.focus({ preventScroll: true });
    nameRef.current?.select();
  }, []);
  return (
    <Dialog onSubmit={e => e.preventDefault()} aria-label="Output Frame To:">
      <DTitle><AeLogo $s={15} $f={8}>Ae</AeLogo>Output Frame To:<PlainButton type="button" aria-label="Close"><Cross color="#111" size={13} sw={1.1} /></PlainButton></DTitle>
      <DNav>
        <NavBtn type="button" $w={14} aria-label="Back"><Ico w={12} h={10}><path d="M12 5H1M5 1L1 5l4 4" stroke="#cfcfcf" strokeWidth="1.300" /></Ico></NavBtn>
        <NavBtn type="button" $w={44} aria-label="Forward"><Ico w={12} h={10}><path d="M0 5h11M7 1l4 4-4 4" stroke="#cfcfcf" strokeWidth="1.300" /></Ico></NavBtn>
        <NavBtn type="button" $w={6} aria-label="Recent"><Chevron color="#c4c4c4" size={7} /></NavBtn>
        <NavBtn type="button" $w={30} aria-label="Up"><Ico w={12} h={13}><path d="M6 13V1.500M1 6.500l5-5 5 5" stroke="#666" strokeWidth="1.700" /></Ico></NavBtn>
        <Address>
          <DocIcon /><Chevron dir="right" size={8} color="#666" />
          <AddrBtn type="button">This PC</AddrBtn><Chevron dir="right" size={8} color="#666" />
          <AddrBtn type="button">Documents</AddrBtn><Chevron dir="right" size={8} color="#666" />
          <AddrEnd>
            <AddrEndBtn type="button" aria-label="History"><Chevron size={11} color="#666" sw={1.6} /></AddrEndBtn>
            <AddrEndBtn type="button" $bar aria-label="Refresh"><Ico w={12} h={12}><path d="M3 4A4 4 0 108.500 3.500" stroke="#666" strokeWidth="1.500" /><path d="M1 1.800h3.800v3.700" stroke="#666" strokeWidth="1.500" /></Ico></AddrEndBtn>
          </AddrEnd>
        </Address>
        <DSearch aria-label="Search"><input placeholder="Search Documents" /><Loupe color="#777" size={12} sw={1.7} /></DSearch>
      </DNav>
      <DBar>
        <BarBtn type="button">Organize <Caret color="#243a66" w={8} /></BarBtn>
        <BarBtn type="button">New folder</BarBtn>
        <BarEnd><PicIcon w={14} h={11} /><Caret color="#222" w={8} /><HelpDot type="button">?</HelpDot></BarEnd>
      </DBar>
      <DMain>
        <Tree>
          {NODES.map(([name, icon, o], i) => <Node key={i} $root={o.root} $gap={o.gap} $on={o.on}><i>{icon}</i>{name}</Node>)}
        </Tree>
        <DTrack><Chevron dir="up" sw={2} color="#555" /><DThumb /><Chevron dir="down" sw={2} color="#555" /></DTrack>
        <Files>
          <FileTile type="button"><AdobeFolder />Adobe</FileTile>
          <FileTile type="button"><VideoFolder />VideoCopilot</FileTile>
        </Files>
      </DMain>
      <DForm>
        <Field>
          <label htmlFor="fname">File <u>n</u>ame:</label>
          <Combo><input id="fname" ref={nameRef} defaultValue="Bottom Left (0-00-00-30)" /><Chevron color="#555" size={9} /></Combo>
        </Field>
        <Field>
          <label htmlFor="ftype">Save as <u>t</u>ype:</label>
          <SelectWrap><select id="ftype"><option>Photoshop (*.psd)</option></select><Chevron color="#555" size={9} /></SelectWrap>
        </Field>
        <Sub>
          <SubCheck><input type="checkbox" />Save in subfolder</SubCheck>
          <SubName aria-label="Subfolder" disabled defaultValue="Bottom Left" />
        </Sub>
        <Actions>
          <Hide type="button"><Chevron dir="up" color="#333" sw={1.8} />Hide Folders</Hide>
          <DBtn type="submit" $main><u>S</u>ave</DBtn>
          <DBtn type="button">Cancel</DBtn>
        </Actions>
        <GripCorner><Ico w={9} h={9}><path d="M6 0h2v2H6zM3 3h2v2H3zM6 3h2v2H6zM0 6h2v2H0zM3 6h2v2H3zM6 6h2v2H6z" fill="#bcbcbc" /></Ico></GripCorner>
      </DForm>
    </Dialog>
  );
};

/* ---------- taskbar ---------- */

const Taskbar = styled.footer`
  display: flex; color: #e8e8e8; position: relative;
  background: linear-gradient(90deg, #101617 0, #0f1519 12%, #101320 20%, #0a0a0c 28%, #060607 34%, #190c09 38%, #0a0908 44%, #0a0908 52%, #1a1812 58%, #11110f 66%, #0b0b0b 80%, #0c0c0c 100%);
`;
const Task = styled.button<{ $run?: boolean; $on?: boolean }>`
  display: grid; place-items: center; width: 49px; height: 40px;
  background: ${p => (p.$on ? "#453f41" : "transparent")};
  box-shadow: ${p => (p.$on ? "inset 0 -2px #76b9ed" : "none")};
  background-image: ${p => (p.$run ? "linear-gradient(#76b9ed, #76b9ed)" : "none")};
  background-size: 40px 2px; background-position: center bottom; background-repeat: no-repeat;
  &:first-child { width: 48px; }
`;
const PsLogo = styled(AeLogo)`background: #06202c; border: 2px solid #2aa9d8; color: #35bdee;`;
const AeTask = styled(AeLogo)`border-width: 2px; border-color: #8e63c8;`;
const EpicLogo = styled.span`
  display: flex; flex-direction: column; align-items: center; justify-content: center; width: 20px; height: 24px; border-radius: 2px 2px 8px 8px; background: #1a1a1a; color: #fff;
  font-family: "Roboto", sans-serif; font-size: 8px; font-weight: 700; line-height: 9px; small { font-size: 4px; line-height: 5px; }
`;
const Tray = styled.div`display: flex; align-items: center; gap: 8px; margin-left: auto; padding-right: 22px;`;
const Clock = styled.div`text-align: center; line-height: 18px; width: 62px; white-space: nowrap;`;
const Notify = styled.div`margin-left: 6px;`;

const TaskIcons: [string, React.ReactNode, boolean, boolean][] = [
  ["Start", <Ico w={17} h={17}><path d="M0 2.500L7.500 1.400V8H0zM8.500 1.300L17 0v8H8.500zM0 9h7.500v6.600L0 14.500zM8.500 9H17v8l-8.500-1.300z" fill="#fff" /></Ico>, false, false],
  ["Search", <Ico w={17} h={18}><circle cx="10.500" cy="6.500" r="5" stroke="#fff" strokeWidth="1.400" /><path d="M7 10.500L1 17" stroke="#fff" strokeWidth="1.500" /></Ico>, false, false],
  ["Task View", <Ico w={18} h={16}><path d="M1 1v2.500h10V1M1 5.500h10v5H1zM1 15v-2.500h10V15M15 0v3M15 9v7" stroke="#fff" strokeWidth="1.300" /><path d="M13.800 4.500h2.400v3h-2.400z" fill="#fff" /></Ico>, false, false],
  ["Chrome", <Ico w={24} h={24}><circle cx="12" cy="12" r="11" fill="#e7453a" /><path d="M2.500 6.500L8 15l4.500 8A11 11 0 012.500 6.500z" fill="#34a350" /><path d="M12 7h10a11 11 0 01-9.800 16L17 14z" fill="#fbc920" /><circle cx="12" cy="12" r="5.200" fill="#fff" /><circle cx="12" cy="12" r="4.200" fill="#3b7fe8" /></Ico>, true, false],
  ["Tools", <Ico w={25} h={25}><circle cx="12.500" cy="12.500" r="11.300" fill="#a51318" stroke="#dcdcdc" strokeWidth="1.300" /><path d="M12 6l1.500 5.500L7 20M13.500 11.500L18 20M8 6.500l4.500 5" stroke="#f3e7d8" strokeWidth="2" /><circle cx="12.500" cy="5" r="1.700" fill="#f3e7d8" /></Ico>, false, false],
  ["File Explorer", <Ico w={23} h={21}><path d="M0 0h8l2 2h12v18H0z" fill="#f4cf67" /><path d="M0 5h22v14H0z" fill="#fbe391" /><path d="M4 11h15v9h-4v-4H8v4H4z" fill="#3aa6df" /></Ico>, true, false],
  ["Launcher", <Ico w={22} h={25}><path d="M12 0c5 1 7 5 6 11-1 5-4 8-8 8-5-6-3-14 2-19z" fill="#55585b" /><path d="M12 0c-2 6-1 13 2 18 4-3 5-14-2-18z" fill="#898d90" /><path d="M0 24l2-2h19l-1 2z" fill="#a2152c" /></Ico>, false, false],
  ["Epic Games", <EpicLogo>EPIC<small>GAMES</small></EpicLogo>, false, false],
  ["Snipping Tool", <Ico w={25} h={25}><ellipse cx="12" cy="8" rx="10.500" ry="6.500" fill="#e7e3e1" stroke="#a99" transform="rotate(-20 12 8)" /><path d="M3 10c5-1 9-3 13-7" stroke="#c44" strokeWidth="1.400" /><path d="M13 11l5 8M20 10l-5 8" stroke="#9ab" strokeWidth="1.800" /><circle cx="14" cy="20.500" r="2.400" stroke="#2a84c8" strokeWidth="1.700" /><circle cx="20" cy="20.500" r="2.400" stroke="#2a84c8" strokeWidth="1.700" /></Ico>, false, false],
  ["Creative Cloud", <Ico w={22} h={24}><path d="M0 0h22v24H0z" fill="#cc1018" /><path d="M7.500 17.500a5 5 0 01-.5-9.800 5.500 5.500 0 019.500 1A4.500 4.500 0 0116 17.500z" stroke="#f5b8b8" strokeWidth="1.400" /><path d="M12.500 14.800L9.500 11.500a2 2 0 10-2.500 3.300c2.500.8 3.500-5.300 7-4.500a2.300 2.300 0 01.5 4.500" stroke="#f5b8b8" strokeWidth="1.300" /></Ico>, true, false],
  ["Photoshop", <PsLogo $s={22} $f={11}>Ps</PsLogo>, true, false],
  ["Discord", <Ico w={25} h={26}><path d="M2 2a3 3 0 013-2h13a3 3 0 013 3v19l-5-4H5a3 3 0 01-3-3z" fill="#6573b4" /><path d="M6 13c0-3 .5-5 1.500-7 2-1 6-1 8 0 1 2 1.500 4 1.500 7-3 2-8 2-11 0z" fill="#e9ebf6" /><circle cx="9.500" cy="10" r="1.400" fill="#6573b4" /><circle cx="13.800" cy="10" r="1.400" fill="#6573b4" /><circle cx="18" cy="19" r="6.500" fill="#d9484c" /><circle cx="18" cy="19" r="2.500" fill="#fff" /></Ico>, true, false],
  ["After Effects", <AeTask $s={22} $f={11}>Ae</AeTask>, false, true],
];

const TaskbarView = () => (
  <Taskbar>
    {TaskIcons.map(([n, icon, run, on]) => <Task key={n} aria-label={n} $run={run} $on={on}>{icon}</Task>)}
    <Tray>
      <Chevron dir="up" size={13} color="#eee" sw={1.1} />
      <Ico w={17} h={14}><path d="M4.500 1h11v8h-11zM10 9v3M7 12.500h7" stroke="#eee" strokeWidth="1.200" /><path d="M1 4h4v3H1zM3 7v6h3" fill="#111" stroke="#eee" /></Ico>
      <Ico w={16} h={11}><path d="M4 11a4 4 0 01-.5-7.500A5 5 0 0112 4a3.500 3.500 0 01.5 7z" fill="#eee" /></Ico>
      <Ico w={18} h={14}><path d="M1 5h3l4-4v12L4 9H1z" stroke="#eee" /><path d="M10 5c1 1 1 3 0 4M12 3c2.500 2 2.500 6 0 8M14.500 1c3.500 3.500 3.500 8.500 0 12" stroke="#eee" strokeWidth="1.100" /></Ico>
      <span>ENG</span>
      <Clock>12:23 PM<br />8/9/2019</Clock>
      <Notify><Ico w={21} h={20}><path d="M1 1h15v12h-5l-3 4v-4H1z" fill="#eee" /><path d="M4 4.500h9M4 7h9M4 9.500h6" stroke="#222" /><circle cx="15" cy="14" r="5.500" fill="#222" stroke="#ddd" strokeWidth=".8" /><text x="15" y="17" fontSize="8" textAnchor="middle" fill="#fff">1</text></Ico></Notify>
    </Tray>
  </Taskbar>
);

const SPACES: [string, number][] = [["Learn", 73], ["Standard", 89], ["Small Screen", 110], ["Libraries", 83]];

export default function App() {
  return (
    <>
      <Global />
      <Shell>
        <TitleArea>
          <TitleRow>
            <AeLogo $s={15} $f={8}>Ae</AeLogo>
            <TitleText>Adobe After Effects - C:\Users\ESLau\OneDrive\ESL\Brendan's Project\MEO R6 2019\After Effects\Walk Ins_v1.aep *</TitleText>
            <WinButtons>
              <PlainButton aria-label="Minimize"><Ico w={10} h={10}><path d="M0 5.500h10" stroke="#777" /></Ico></PlainButton>
              <PlainButton aria-label="Restore"><Ico w={11} h={11}><path d="M.5 3h7v7.500h-7zM3 3V.500h7.500V8H8" stroke="#777" /></Ico></PlainButton>
              <PlainButton aria-label="Close"><Cross color="#777" size={12} /></PlainButton>
            </WinButtons>
          </TitleRow>
          <MenuRow>
            {["File", "Edit", "Composition", "Layer", "Effect", "Animation", "View", "Window", "Help"].map(m => <PlainButton key={m}>{m}</PlainButton>)}
          </MenuRow>
        </TitleArea>
        <Toolbar>
          <Tool aria-label="Home">{TOOLS.home}</Tool><Sep />
          <Tool $on aria-label="Selection">{TOOLS.arrow}</Tool><Tool aria-label="Hand">{TOOLS.hand}</Tool><Tool aria-label="Zoom">{TOOLS.zoom}</Tool><Sep />
          <Tool aria-label="Rotate">{TOOLS.rotate}</Tool><Tool $more aria-label="Camera">{TOOLS.camera}</Tool><Tool aria-label="Anchor">{TOOLS.anchor}</Tool><Sep />
          <Tool $more aria-label="Rectangle">{TOOLS.rect}</Tool><Tool $more aria-label="Pen">{TOOLS.pen}</Tool><Tool $more aria-label="Type">{TOOLS.type}</Tool><Sep />
          <Tool aria-label="Brush">{TOOLS.brush}</Tool><Tool aria-label="Stamp">{TOOLS.stamp}</Tool><Tool aria-label="Eraser">{TOOLS.eraser}</Tool><Sep />
          <Tool $more aria-label="Roto">{TOOLS.roto}</Tool><Sep $m={2} /><Tool $more aria-label="Puppet">{TOOLS.pin}</Tool><Sep $m={22} />
          <Tool $on $dim aria-label="Local axis">{TOOLS.axisBlue}</Tool><Tool $dim aria-label="World axis">{TOOLS.axis}</Tool><Tool $dim aria-label="View axis">{TOOLS.axisView}</Tool><Sep $m={8} />
          <SnapLabel><SnapBox type="checkbox" defaultChecked />Snapping</SnapLabel>
          <Tool aria-label="Snap edges"><Ico w={14} h={14}><path d="M1 13l5-5M6 7l6 6M6 8l5-6" stroke="#b4b4b4" strokeWidth="1.300" /><path d="M8 0h6v6z" fill="#b4b4b4" /></Ico></Tool>
          <Tool aria-label="Snap collapse"><Ico w={14} h={14}><path d="M1 4V1h3M10 1h3v3M13 10v3h-3M4 13H1v-3" stroke={c.blue} strokeWidth="1.300" /><path d="M4 5h2M8 5h2M4 9h2M8 9h2M5 4v2M9 4v2M5 8v2M9 8v2" stroke={c.blue} /></Ico></Tool>
          <Spaces>
            <Sep $m={11} />
            <Space $w={50} $on>Default</Space><BurgerSlot><Burger color={c.blue} /></BurgerSlot>
            {SPACES.map(([n, w]) => <Space key={n} $w={w}>{n}</Space>)}
            <Ico w={11} h={9}><path d="M1 .5l4 4-4 4M6 .5l4 4-4 4" stroke="#c4c4c4" strokeWidth="1.500" /></Ico>
            <Sep $m={9} />
            <Ico w={19} h={12}><path d="M0 0h19v12H0z" fill="#c4c4c4" /><path d="M5.500 3a3 3 0 100 6 3 3 0 000-6zM10 4h7M10 8h7" stroke="#333" strokeWidth="1.500" /><path d="M13 2.500v3M15 6.500v3" stroke="#333" /></Ico>
            <HelpBox aria-label="Search Help"><Loupe /><input placeholder="Search Help" /></HelpBox>
          </Spaces>
        </Toolbar>
        <Workspace><ProjectPanel /><CompPanel /><RightPanel /></Workspace>
        <TimelinePanel />
        <TaskbarView />
        <SaveDialog />
      </Shell>
    </>
  );
}
